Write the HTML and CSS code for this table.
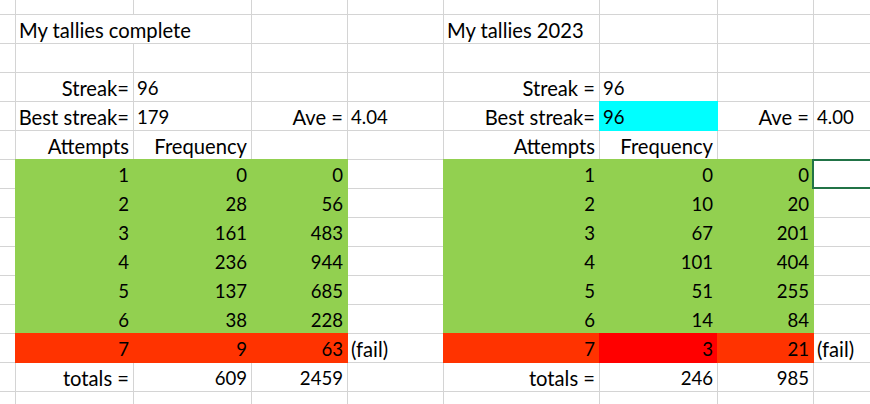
FILE: index.html
```html
<!DOCTYPE html>
<html>
<head>
<meta charset="utf-8">
<link rel="stylesheet" href="styles.css">
</head>
<body>
<div class="sheet">
  <!-- top partial row -->
  <div class="c"></div><div class="c"></div><div class="c"></div><div class="c"></div><div class="c"></div><div class="c"></div><div class="c"></div><div class="c"></div><div class="c"></div>
  <!-- titles -->
  <div class="c"></div><div class="c span2 t">My tallies complete</div><div class="c"></div><div class="c"></div><div class="c t">My tallies 2023</div><div class="c"></div><div class="c"></div><div class="c"></div>
  <!-- blank -->
  <div class="c"></div><div class="c"></div><div class="c"></div><div class="c"></div><div class="c"></div><div class="c"></div><div class="c"></div><div class="c"></div><div class="c"></div>
  <!-- streak -->
  <div class="c"></div><div class="c r t">Streak=</div><div class="c">96</div><div class="c"></div><div class="c"></div><div class="c r t">Streak =</div><div class="c">96</div><div class="c"></div><div class="c"></div>
  <!-- best streak -->
  <div class="c"></div><div class="c r t">Best streak=</div><div class="c">179</div><div class="c r t">Ave =</div><div class="c">4.04</div><div class="c r t">Best streak=</div><div class="c cy">96</div><div class="c r t">Ave =</div><div class="c">4.00</div>
  <!-- headers -->
  <div class="c"></div><div class="c r t">Attempts</div><div class="c r t">Frequency</div><div class="c"></div><div class="c"></div><div class="c r t">Attempts</div><div class="c r t">Frequency</div><div class="c"></div><div class="c"></div>
  <!-- 1 -->
  <div class="c"></div><div class="c r g">1</div><div class="c r g">0</div><div class="c r g">0</div><div class="c"></div><div class="c r g">1</div><div class="c r g">0</div><div class="c r g">0</div><div class="c"></div>
  <!-- 2 -->
  <div class="c"></div><div class="c r g">2</div><div class="c r g">28</div><div class="c r g">56</div><div class="c"></div><div class="c r g">2</div><div class="c r g">10</div><div class="c r g">20</div><div class="c"></div>
  <!-- 3 -->
  <div class="c"></div><div class="c r g">3</div><div class="c r g">161</div><div class="c r g">483</div><div class="c"></div><div class="c r g">3</div><div class="c r g">67</div><div class="c r g">201</div><div class="c"></div>
  <!-- 4 -->
  <div class="c"></div><div class="c r g">4</div><div class="c r g">236</div><div class="c r g">944</div><div class="c"></div><div class="c r g">4</div><div class="c r g">101</div><div class="c r g">404</div><div class="c"></div>
  <!-- 5 -->
  <div class="c"></div><div class="c r g">5</div><div class="c r g">137</div><div class="c r g">685</div><div class="c"></div><div class="c r g">5</div><div class="c r g">51</div><div class="c r g">255</div><div class="c"></div>
  <!-- 6 -->
  <div class="c"></div><div class="c r g">6</div><div class="c r g">38</div><div class="c r g">228</div><div class="c"></div><div class="c r g">6</div><div class="c r g">14</div><div class="c r g">84</div><div class="c"></div>
  <!-- 7 -->
  <div class="c"></div><div class="c r rd">7</div><div class="c r rd">9</div><div class="c r rd">63</div><div class="c t">(fail)</div><div class="c r rd">7</div><div class="c r rr">3</div><div class="c r rd">21</div><div class="c t">(fail)</div>
  <!-- totals -->
  <div class="c"></div><div class="c r t">totals =</div><div class="c r">609</div><div class="c r">2459</div><div class="c"></div><div class="c r t">totals =</div><div class="c r">246</div><div class="c r">985</div><div class="c"></div>
  <!-- bottom partial row -->
  <div class="c"></div><div class="c"></div><div class="c"></div><div class="c"></div><div class="c"></div><div class="c"></div><div class="c"></div><div class="c"></div><div class="c"></div>

  <div class="selection"></div>
</div>
</body>
</html>
```
FILE: styles.css
```css
html, body {
  margin: 0;
  padding: 0;
  background: #ffffff;
  overflow: hidden;
}

.sheet {
  position: relative;
  display: grid;
  grid-template-columns: 15px 117px 117px 95px 95px 155px 117px 95px 1fr;
  grid-template-rows: 14px repeat(13, 28px) 1fr;
  gap: 1px;
  background: #d4d4d4;
  width: 870px;
  height: 404px;
  overflow: hidden;
  font-family: Lato, "Liberation Sans", sans-serif;
  font-size: 18.6px;
  color: #000000;
}

.c {
  background: #ffffff;
  display: flex;
  align-items: flex-end;
  justify-content: flex-start;
  padding: 0 4px 3px 3px;
  line-height: 19px;
  white-space: nowrap;
  overflow: visible;
  min-width: 0;
}

.t {
  font-size: 20.2px;
}

.span2 {
  grid-column: span 2;
}

.r {
  justify-content: flex-end;
}

.g {
  background: #92d050;
  outline: 1px solid #92d050;
}

.rd {
  background: #ff3300;
  outline: 1px solid #ff3300;
}

.rr {
  background: #ff0000;
  outline: 1px solid #ff0000;
}

.cy {
  background: #00ffff;
  outline: 1px solid #00ffff;
}

.selection {
  position: absolute;
  left: 812px;
  top: 159px;
  width: 80px;
  height: 26px;
  border: 2px solid #217346;
}
```
